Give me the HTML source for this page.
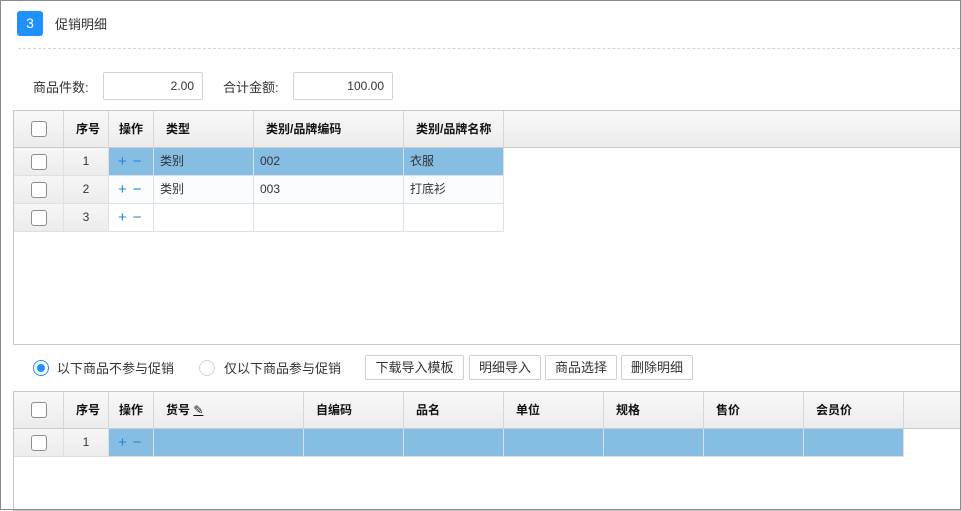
<!DOCTYPE html>
<html><head><meta charset="utf-8"><style>
*{box-sizing:border-box;margin:0;padding:0}
body{width:961px;height:510px;overflow:hidden;background:#fff;font-family:"Liberation Sans","Noto Sans CJK SC",sans-serif;font-size:13px;color:#333;position:relative}
.a{position:absolute}
.frame{left:0;top:0;width:961px;height:510px;border:1px solid #8a8a8a}
.badge{left:17px;top:11px;width:26px;height:25px;background:#1e90ff;border-radius:3px;color:#fff;text-align:center;line-height:25px;font-size:14px}
.inp{height:28px;border:1px solid #d4d4d4;border-radius:2px;text-align:right;padding-right:8px;line-height:26px;font-size:12px}
.h{background:linear-gradient(#f8f8f8,#ececec);border-right:1px solid #d6d6d6;border-bottom:1px solid #c8ccd0;font-weight:bold;font-size:12px;color:#111;line-height:36px}
.c{border-right:1px solid #dde0e4;border-bottom:1px solid #dde0e4;font-size:12px;line-height:27px}
.g{background:linear-gradient(#f6f6f6,#ececec)}
.sel{background:#85bde3}
.cb{width:16px;height:16px;border:1px solid #8e8e8e;border-radius:3px;background:#fff;position:absolute;left:17px}
.pm{color:#1e88d8;font-size:15px;padding-left:9px;letter-spacing:6px;font-weight:300}
.btn{top:355px;height:25px;border:1px solid #d0d0d0;border-radius:2px;font-size:13px;line-height:23px;text-align:center;background:#fff}
</style></head><body>
<div class="a frame"></div>
<div class="a badge">3</div>
<div class="a" style="left:55px;top:14px;font-size:13px">促销明细</div>
<div class="a" style="left:18px;top:48px;width:942px;border-top:1px dashed #d4d4d4"></div>
<div class="a" style="left:33px;top:77px">商品件数:</div>
<div class="a inp" style="left:103px;top:72px;width:100px">2.00</div>
<div class="a" style="left:223px;top:77px">合计金额:</div>
<div class="a inp" style="left:293px;top:72px;width:100px">100.00</div>

<!-- table 1 -->
<div class="a" style="left:13px;top:110px;width:948px;height:235px;border:1px solid #c4c8cc;border-right:none"></div>
<div class="a h" style="left:14px;top:111px;width:946px;height:37px;border-right:none"></div>
<div class="a h" style="left:14px;top:111px;width:50px;height:37px"><div class="cb" style="top:10px"></div></div>
<div class="a h" style="left:64px;top:111px;width:45px;height:37px;text-align:right;padding-right:8px">序号</div>
<div class="a h" style="left:109px;top:111px;width:45px;height:37px;text-align:center">操作</div>
<div class="a h" style="left:154px;top:111px;width:100px;height:37px;padding-left:12px">类型</div>
<div class="a h" style="left:254px;top:111px;width:150px;height:37px;padding-left:12px">类别/品牌编码</div>
<div class="a h" style="left:404px;top:111px;width:100px;height:37px;padding-left:12px">类别/品牌名称</div>

<div class="a c g" style="left:14px;top:148px;width:50px;height:28px"><div class="cb" style="top:6px"></div></div>
<div class="a c g" style="left:64px;top:148px;width:45px;height:28px;text-align:center">1</div>
<div class="a c sel pm" style="left:109px;top:148px;width:45px;height:28px">+−</div>
<div class="a c sel" style="left:154px;top:148px;width:100px;height:28px;padding-left:6px">类别</div>
<div class="a c sel" style="left:254px;top:148px;width:150px;height:28px;padding-left:6px">002</div>
<div class="a c sel" style="left:404px;top:148px;width:100px;height:28px;padding-left:6px">衣服</div>

<div class="a c g" style="left:14px;top:176px;width:50px;height:28px"><div class="cb" style="top:6px"></div></div>
<div class="a c g" style="left:64px;top:176px;width:45px;height:28px;text-align:center">2</div>
<div class="a c pm" style="left:109px;top:176px;width:45px;height:28px;background:#fafcfe">+−</div>
<div class="a c" style="left:154px;top:176px;width:100px;height:28px;padding-left:6px;background:#fafcfe">类别</div>
<div class="a c" style="left:254px;top:176px;width:150px;height:28px;padding-left:6px;background:#fafcfe">003</div>
<div class="a c" style="left:404px;top:176px;width:100px;height:28px;padding-left:6px;background:#fafcfe">打底衫</div>

<div class="a c g" style="left:14px;top:204px;width:50px;height:28px"><div class="cb" style="top:6px"></div></div>
<div class="a c g" style="left:64px;top:204px;width:45px;height:28px;text-align:center">3</div>
<div class="a c pm" style="left:109px;top:204px;width:45px;height:28px">+−</div>
<div class="a c" style="left:154px;top:204px;width:100px;height:28px"></div>
<div class="a c" style="left:254px;top:204px;width:150px;height:28px"></div>
<div class="a c" style="left:404px;top:204px;width:100px;height:28px"></div>

<!-- radios & buttons -->
<div class="a" style="left:33px;top:360px;width:16px;height:16px;border:1px solid #1e90ff;border-radius:50%"><div style="margin:3px;width:8px;height:8px;border-radius:50%;background:#1e90ff"></div></div>
<div class="a" style="left:57px;top:358px">以下商品不参与促销</div>
<div class="a" style="left:199px;top:360px;width:16px;height:16px;border:1px solid #d4d4d4;border-radius:50%"></div>
<div class="a" style="left:224px;top:358px">仅以下商品参与促销</div>
<div class="a btn" style="left:365px;width:99px">下载导入模板</div>
<div class="a btn" style="left:469px;width:72px">明细导入</div>
<div class="a btn" style="left:545px;width:72px">商品选择</div>
<div class="a btn" style="left:621px;width:72px">删除明细</div>

<!-- table 2 -->
<div class="a" style="left:13px;top:391px;width:948px;height:120px;border:1px solid #c4c8cc;border-right:none"></div>
<div class="a h" style="left:14px;top:392px;width:946px;height:37px;border-right:none"></div>
<div class="a h" style="left:14px;top:392px;width:50px;height:37px"><div class="cb" style="top:10px"></div></div>
<div class="a h" style="left:64px;top:392px;width:45px;height:37px;text-align:right;padding-right:8px">序号</div>
<div class="a h" style="left:109px;top:392px;width:45px;height:37px;text-align:center">操作</div>
<div class="a h" style="left:154px;top:392px;width:150px;height:37px;padding-left:12px">货号 <span style="font-weight:normal;text-decoration:underline">✎</span></div>
<div class="a h" style="left:304px;top:392px;width:100px;height:37px;padding-left:12px">自编码</div>
<div class="a h" style="left:404px;top:392px;width:100px;height:37px;padding-left:12px">品名</div>
<div class="a h" style="left:504px;top:392px;width:100px;height:37px;padding-left:12px">单位</div>
<div class="a h" style="left:604px;top:392px;width:100px;height:37px;padding-left:12px">规格</div>
<div class="a h" style="left:704px;top:392px;width:100px;height:37px;padding-left:12px">售价</div>
<div class="a h" style="left:804px;top:392px;width:100px;height:37px;padding-left:12px">会员价</div>

<div class="a c g" style="left:14px;top:429px;width:50px;height:28px"><div class="cb" style="top:6px"></div></div>
<div class="a c g" style="left:64px;top:429px;width:45px;height:28px;text-align:center">1</div>
<div class="a c sel pm" style="left:109px;top:429px;width:45px;height:28px">+−</div>
<div class="a c sel" style="left:154px;top:429px;width:150px;height:28px"></div>
<div class="a c sel" style="left:304px;top:429px;width:100px;height:28px"></div>
<div class="a c sel" style="left:404px;top:429px;width:100px;height:28px"></div>
<div class="a c sel" style="left:504px;top:429px;width:100px;height:28px"></div>
<div class="a c sel" style="left:604px;top:429px;width:100px;height:28px"></div>
<div class="a c sel" style="left:704px;top:429px;width:100px;height:28px"></div>
<div class="a c sel" style="left:804px;top:429px;width:100px;height:28px"></div>
<div class="a frame" style="background:none"></div>
</body></html>
